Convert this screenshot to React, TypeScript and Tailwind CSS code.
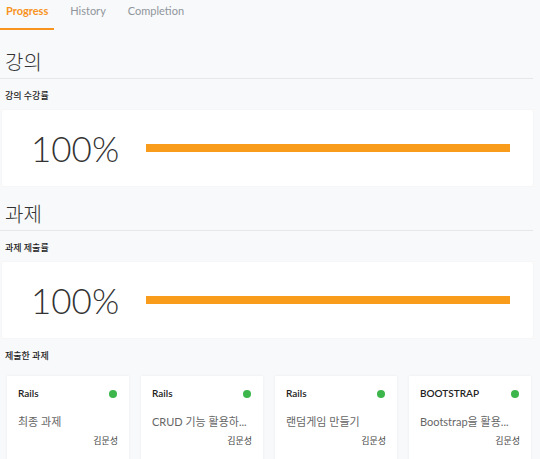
const font = { fontFamily: 'Lato, "Noto Sans CJK KR", sans-serif' };

type Assignment = {
  tag: string;
  title: string;
  author: string;
};

const assignments: Assignment[] = [
  { tag: "Rails", title: "최종 과제", author: "김문성" },
  { tag: "Rails", title: "CRUD 기능 활용하...", author: "김문성" },
  { tag: "Rails", title: "랜덤게임 만들기", author: "김문성" },
  { tag: "BOOTSTRAP", title: "Bootstrap을 활용...", author: "김문성" },
];

function Tabs() {
  const tabs = ["Progress", "History", "Completion"];
  return (
    <div className="flex h-[30px] items-stretch gap-[10px]">
      {tabs.map((t, i) => (
        <div
          key={t}
          className={
            i === 0
              ? "border-b-2 border-[#f7931e] px-[6px] pt-[4px] text-[11px] leading-[14px] font-bold text-[#f7931e]"
              : "border-b-2 border-transparent px-[6px] pt-[4px] text-[11px] leading-[14px] text-[#8f959c]"
          }
        >
          {t}
        </div>
      ))}
    </div>
  );
}

function Section({ heading, label, top }: { heading: string; label: string; top: string }) {
  return (
    <div className={top}>
      <h2 className="border-b border-[#e5e7ea] pb-[4px] pl-[5px] text-[20px] leading-[24px] font-light text-[#333]">
        {heading}
      </h2>
      <p className="mt-[11px] pl-[5px] text-[9px] leading-[12px] font-medium text-[#222]">
        {label}
      </p>
      <div className="mt-[8px] ml-[2px] flex h-[76px] items-center rounded-[2px] bg-white shadow-[0_0_2px_rgba(0,0,0,0.06)]">
        <span className="w-[144px] pl-[29px] text-[35px] leading-none font-light text-[#333]">
          100%
        </span>
        <div className="h-[8px] w-[364px] bg-[#f99c1b]" />
      </div>
    </div>
  );
}

function AssignmentCard({ tag, title, author }: Assignment) {
  return (
    <div className="h-[90px] w-[122px] bg-white px-[11px] pt-[10px] shadow-[0_0_3px_rgba(0,0,0,0.06)]">
      <div className="flex items-center justify-between pr-[1px]">
        <span className="text-[10px] leading-[15px] font-semibold text-[#222]">{tag}</span>
        <span className="h-[8px] w-[8px] rounded-full bg-[#3cb54a]" />
      </div>
      <p className="mt-[13px] whitespace-nowrap text-[11px] leading-[16px] text-[#666]">
        {title}
      </p>
      <p className="mt-[5px] text-right text-[9px] leading-[12px] text-[#444]">
        {author}
      </p>
    </div>
  );
}

export default function App() {
  return (
    <div
      className="h-[459px] w-[540px] overflow-hidden bg-[#f8f9fa] pr-[7px]"
      style={font}
    >
      <Tabs />
      <Section heading="강의" label="강의 수강률" top="mt-[20px]" />
      <Section heading="과제" label="과제 제출률" top="mt-[16px]" />
      <p className="mt-[12px] pl-[5px] text-[9px] leading-[12px] font-medium text-[#222]">
        제출한 과제
      </p>
      <div className="mt-[14px] flex gap-[12px] pl-[7px]">
        {assignments.map((a, i) => (
          <AssignmentCard key={i} {...a} />
        ))}
      </div>
    </div>
  );
}
